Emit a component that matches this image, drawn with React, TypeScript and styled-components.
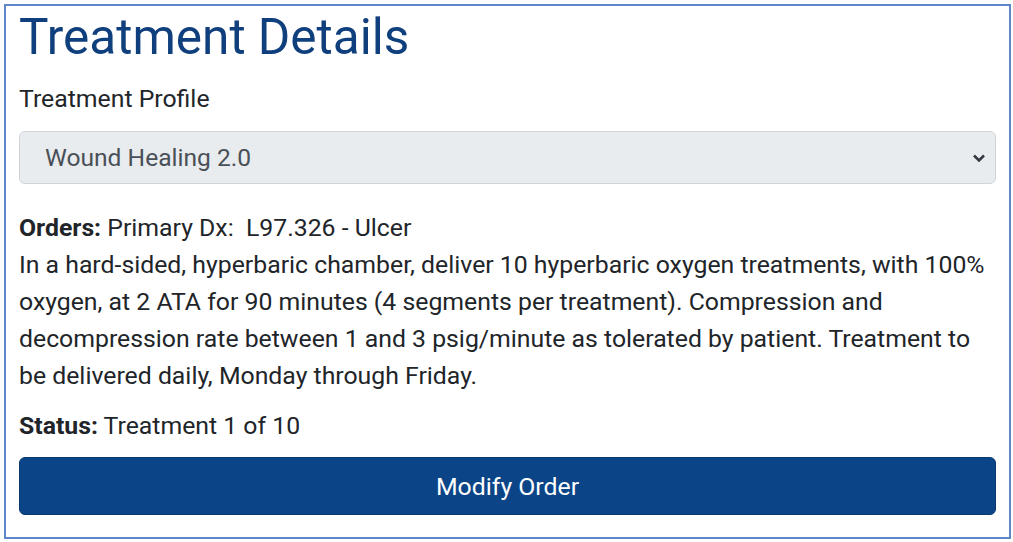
import { FC } from "react";
import { styled, createGlobalStyle } from "styled-components";

const GlobalStyle = createGlobalStyle`
  html, body {
    margin: 0;
    padding: 0;
    background: #ffffff;
    font-family: Roboto, "Liberation Sans", sans-serif;
  }
`;

const Page = styled.div`
  width: 1013px;
  height: 542px;
  padding: 4px 2px 3px 4px;
  box-sizing: border-box;
  background: #fff;
`;

const Card = styled.section`
  height: 100%;
  box-sizing: border-box;
  border: 2px solid #5f86c6;
  padding: 2px 13px 0 13px;
  display: flex;
  flex-direction: column;
`;

const Title = styled.h1`
  margin: 0;
  font-size: 49.5px;
  font-weight: 400;
  line-height: 58px;
  color: #0f3f7d;
`;

const Label = styled.div`
  margin-top: 18px;
  font-size: 24.8px;
  line-height: 30px;
  color: #212529;
`;

const SelectBox = styled.div`
  margin-top: 17px;
  height: 53px;
  box-sizing: border-box;
  background: #e9ecef;
  border: 1px solid #ced4da;
  border-radius: 6px;
  display: flex;
  align-items: center;
  justify-content: space-between;
  padding: 0 9px 0 25px;
  font-size: 24.6px;
  color: #495057;
`;

const Orders = styled.div`
  margin-top: 25px;
  font-size: 24.8px;
  line-height: 37px;
  color: #212529;
  white-space: nowrap;
`;

const Status = styled.div`
  margin-top: 13px;
  font-size: 24.8px;
  line-height: 37px;
  color: #212529;
`;

const Strong = styled.b`
  font-weight: 700;
`;

const Button = styled.button`
  margin-top: 13px;
  height: 58px;
  width: 100%;
  border: 1px solid #08386f;
  border-radius: 6px;
  background: #0b4588;
  color: #ffffff;
  font-family: Roboto, "Liberation Sans", sans-serif;
  font-size: 24.8px;
  cursor: pointer;
`;

const Chevron: FC = () => (
  <svg width="14" height="10" viewBox="0 0 14 10">
    <path d="M2 2.5 L7 7.5 L12 2.5" fill="none" stroke="#343a40" strokeWidth="2.6" />
  </svg>
);

export default function App() {
  return (
    <Page>
      <GlobalStyle />
      <Card>
        <Title>Treatment Details</Title>
        <Label>Treatment Profile</Label>
        <SelectBox>
          <span>Wound Healing 2.0</span>
          <Chevron />
        </SelectBox>
        <Orders>
          <Strong>Orders:</Strong> Primary Dx:&nbsp; L97.326 - Ulcer
          <br />
          In a hard-sided, hyperbaric chamber, deliver 10 hyperbaric oxygen treatments, with 100%
          <br />
          oxygen, at 2 ATA for 90 minutes (4 segments per treatment). Compression and
          <br />
          decompression rate between 1 and 3 psig/minute as tolerated by patient. Treatment to
          <br />
          be delivered daily, Monday through Friday.
        </Orders>
        <Status>
          <Strong>Status:</Strong> Treatment 1 of 10
        </Status>
        <Button>Modify Order</Button>
      </Card>
    </Page>
  );
}
